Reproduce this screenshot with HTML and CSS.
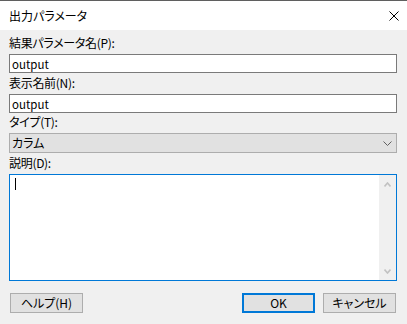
FILE: index.html
```html
<!DOCTYPE html>
<html lang="ja">
<head>
    <meta charset="UTF-8">
    <meta name="viewport" content="width=device-width, initial-scale=1.0">
    <title>出力パラメータ</title>
    <link rel="stylesheet" href="styles.css">
</head>
<body>
    <div class="window">
        <div class="titlebar">
            <span class="title">出力パラメータ</span>
            <span class="close">
                <svg width="10" height="10" viewBox="0 0 10 10">
                    <path d="M0.5 0.5 L9.5 9.5 M9.5 0.5 L0.5 9.5" stroke="#000" stroke-width="1" fill="none"/>
                </svg>
            </span>
        </div>

        <div class="dialog">
            <label class="field-label first" for="result_name">結果パラメータ名(P):</label>
            <input class="text-input" type="text" id="result_name" value="output">

            <label class="field-label" for="display_name">表示名前(N):</label>
            <input class="text-input" type="text" id="display_name" value="output">

            <label class="field-label short">タイプ(T):</label>
            <div class="combo">
                <span>カラム</span>
                <svg class="combo-arrow" width="9" height="5" viewBox="0 0 9 5">
                    <path d="M0.5 0.5 L4.5 4.5 L8.5 0.5" stroke="#606060" stroke-width="1" fill="none"/>
                </svg>
            </div>

            <label class="field-label">説明(D):</label>
            <div class="memo">
                <div class="memo-text"><span class="caret"></span></div>
                <div class="scrollbar">
                    <svg width="7" height="5" viewBox="0 0 7 5">
                        <path d="M0.5 4.5 L3.5 1 L6.5 4.5" stroke="#c2c2c2" stroke-width="1.6" fill="none"/>
                    </svg>
                    <svg width="7" height="5" viewBox="0 0 7 5">
                        <path d="M0.5 0.5 L3.5 4 L6.5 0.5" stroke="#c2c2c2" stroke-width="1.6" fill="none"/>
                    </svg>
                </div>
            </div>

            <div class="buttons">
                <button type="button">ヘルプ(H)</button>
                <span class="spacer"></span>
                <button type="button" class="default">OK</button>
                <button type="button">キャンセル</button>
            </div>
        </div>
    </div>
</body>
</html>
```

FILE: styles.css
```css
body {
    margin: 0;
    padding: 0;
    font-family: "Noto Sans CJK JP", "Liberation Sans", sans-serif;
    font-size: 12px;
    font-feature-settings: "palt";
    color: #000;
    background-color: #f0f0f0;
}

.window {
    width: 407px;
    height: 324px;
    box-sizing: border-box;
    border-top: 1px solid #5f5f5f;
    background-color: #f0f0f0;
}

.titlebar {
    height: 29px;
    background-color: #fff;
    display: flex;
    align-items: center;
    justify-content: space-between;
    padding: 0 8px 0 9px;
}

.title {
    line-height: 12px;
    padding-top: 1px;
}

.close {
    display: flex;
    padding-top: 1px;
}

.dialog {
    display: flex;
    flex-direction: column;
    padding: 0 10px 0 9px;
}

.field-label {
    display: block;
    line-height: 12px;
    letter-spacing: -0.3px;
    padding: 4px 0 5px 0;
}

.field-label.first {
    padding-top: 7px;
}

.field-label.short {
    padding-top: 3px;
}

.text-input {
    height: 19px;
    box-sizing: border-box;
    margin: 0;
    padding: 0 2px;
    border: 1px solid #7a7a7a;
    background-color: #fff;
    font-family: inherit;
    font-size: 11.5px;
    font-feature-settings: "palt";
    color: #000;
    outline: none;
}

.combo {
    height: 20px;
    box-sizing: border-box;
    border: 1px solid #adadad;
    background-color: #e1e1e1;
    display: flex;
    align-items: center;
    justify-content: space-between;
    padding: 0 4px 0 2px;
    line-height: 12px;
}

.memo {
    height: 107px;
    box-sizing: border-box;
    border: 1px solid #0078d7;
    background-color: #fff;
    display: flex;
}

.memo-text {
    flex: 1;
    padding: 3px 0 0 5px;
}

.caret {
    display: block;
    width: 1px;
    height: 12px;
    background-color: #000;
}

.scrollbar {
    width: 17px;
    background-color: #f0f0f0;
    display: flex;
    flex-direction: column;
    align-items: center;
    justify-content: space-between;
    padding: 7px 0 6px 0;
}

.buttons {
    display: flex;
    gap: 8px;
    margin: 12px 1px 0 1px;
}

.spacer {
    flex: 1;
}

button {
    width: 73px;
    height: 20px;
    box-sizing: border-box;
    margin: 0;
    padding: 0;
    border: 1px solid #adadad;
    background-color: #e1e1e1;
    font-family: inherit;
    font-size: 12px;
    font-feature-settings: "palt";
    line-height: 12px;
    color: #000;
}

button.default {
    border: 2px solid #0078d7;
}
```
